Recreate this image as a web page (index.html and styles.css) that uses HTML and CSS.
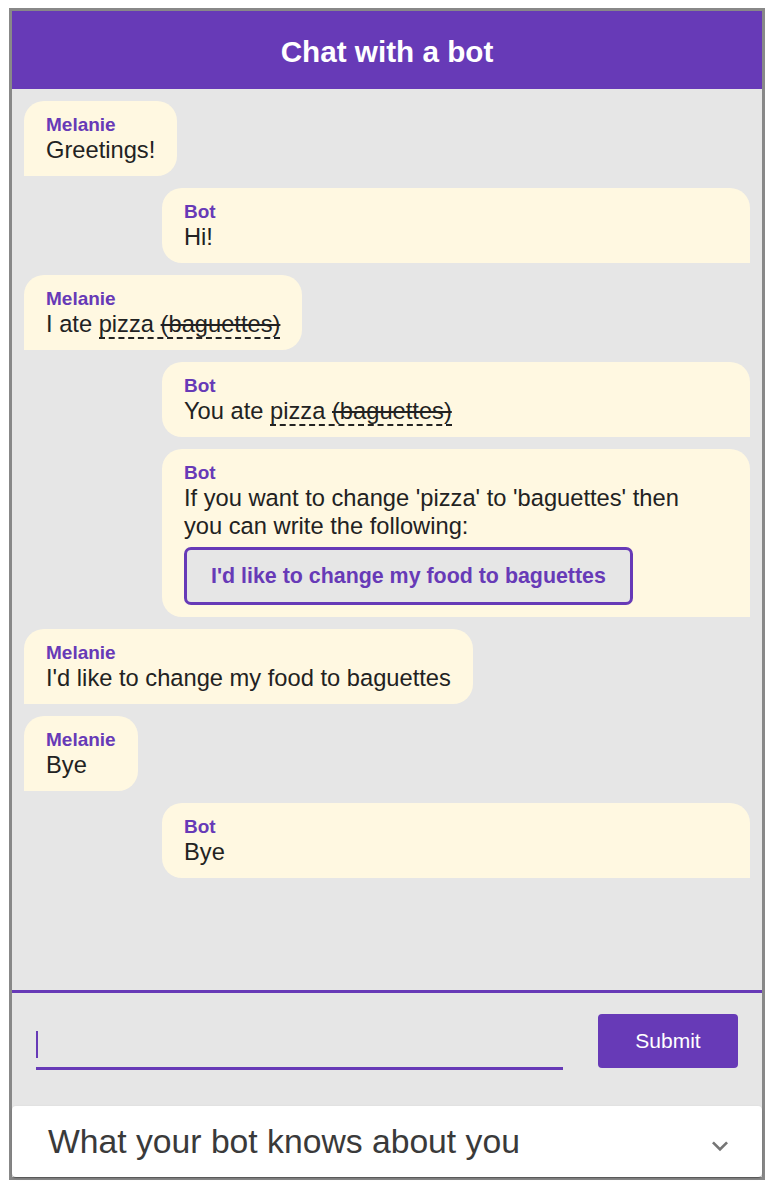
FILE: index.html
```html
<html lang="en">
<head>
<meta charset="UTF-8">
<meta name="viewport" content="width=device-width, initial-scale=1.0">
<title>Chat with a bot</title>
<link rel="stylesheet" href="styles.css">
</head>
<body>
<div class="container">
  <div class="header">
    <h1>Chat with a bot</h1>
  </div>

  <div class="messages">
    <div class="message user">
      <div class="name">Melanie</div>
      <div class="text">Greetings!</div>
    </div>
    <div class="message bot">
      <div class="name">Bot</div>
      <div class="text">Hi!</div>
    </div>
    <div class="message user">
      <div class="name">Melanie</div>
      <div class="text">I ate <span class="fix">pizza <s>(baguettes)</s></span></div>
    </div>
    <div class="message bot">
      <div class="name">Bot</div>
      <div class="text">You ate <span class="fix">pizza <s>(baguettes)</s></span></div>
    </div>
    <div class="message bot">
      <div class="name">Bot</div>
      <div class="text">If you want to change 'pizza' to 'baguettes' then you can write the following:</div>
      <button class="suggestion">I'd like to change my food to baguettes</button>
    </div>
    <div class="message user">
      <div class="name">Melanie</div>
      <div class="text">I'd like to change my food to baguettes</div>
    </div>
    <div class="message user">
      <div class="name">Melanie</div>
      <div class="text">Bye</div>
    </div>
    <div class="message bot">
      <div class="name">Bot</div>
      <div class="text">Bye</div>
    </div>
  </div>

  <form class="composer">
    <div class="field">
      <span class="caret"></span>
      <input type="text" name="message">
    </div>
    <button type="submit" class="submit">Submit</button>
  </form>

  <div class="panel">
    <span class="panel-title">What your bot knows about you</span>
    <svg class="expand" viewBox="0 0 24 24" width="32" height="32">
      <path d="M16.59 8.59L12 13.17 7.41 8.59 6 10l6 6 6-6z" fill="#757575"/>
    </svg>
  </div>
</div>
</body>
</html>
```

FILE: styles.css
```css
body {
  font-family: "Liberation Sans", Arial, sans-serif;
  margin: 8px 9px;
  background-color: #fff;
}

.container {
  width: 756px;
  height: 1172px;
  box-sizing: border-box;
  border: 3px solid #888;
  display: flex;
  flex-direction: column;
  background-color: #e6e6e6;
}

.header {
  height: 78px;
  flex-shrink: 0;
  box-sizing: border-box;
  padding-top: 4px;
  background-color: #673ab7;
  display: flex;
  justify-content: center;
  align-items: center;
}

.header h1 {
  margin: 0;
  color: #fff;
  font-size: 29.7px;
  font-weight: bold;
}

.messages {
  flex: 1;
  display: flex;
  flex-direction: column;
  gap: 12px;
  padding: 12px;
}

.message {
  background-color: #fff8e1;
  padding: 13px 22px 12px;
  color: #222;
}

.message.user {
  align-self: flex-start;
  border-radius: 20px 20px 20px 0;
}

.message.bot {
  margin-left: 138px;
  padding-right: 30px;
  border-radius: 20px 20px 0 20px;
}

.name {
  color: #673ab7;
  font-weight: bold;
  font-size: 19px;
  line-height: 22px;
}

.text {
  font-size: 23.7px;
  line-height: 28px;
}

.fix {
  border-bottom: 2px dashed #222;
}

.suggestion {
  display: block;
  margin-top: 7px;
  padding: 0 24px;
  height: 58px;
  border: 3px solid #673ab7;
  border-radius: 7px;
  background-color: #e6e6e6;
  color: #673ab7;
  font-family: "Liberation Sans", Arial, sans-serif;
  font-size: 21.4px;
  font-weight: bold;
  cursor: pointer;
}

.composer {
  height: 116px;
  flex-shrink: 0;
  box-sizing: border-box;
  margin: 0;
  border-top: 3px solid #673ab7;
  padding: 21px 24px 0;
  display: flex;
  align-items: flex-start;
  gap: 35px;
}

.field {
  flex: 1;
  margin-top: 17px;
  height: 39px;
  box-sizing: border-box;
  border-bottom: 3px solid #673ab7;
  position: relative;
}

.field input {
  width: 100%;
  height: 36px;
  border: none;
  outline: none;
  background: transparent;
  font-size: 24px;
  font-family: "Liberation Sans", Arial, sans-serif;
  padding: 0;
}

.caret {
  position: absolute;
  left: 0;
  top: 0;
  width: 2px;
  height: 27px;
  background-color: #673ab7;
}

.submit {
  width: 140px;
  height: 54px;
  border: none;
  border-radius: 4px;
  background-color: #673ab7;
  color: #fff;
  font-family: "Liberation Sans", Arial, sans-serif;
  font-size: 21px;
  cursor: pointer;
}

.panel {
  height: 71px;
  flex-shrink: 0;
  box-sizing: border-box;
  background-color: #fff;
  border-radius: 4px;
  box-shadow: 0 2px 1px -1px rgba(0, 0, 0, 0.2), 0 1px 1px 0 rgba(0, 0, 0, 0.14), 0 1px 3px 0 rgba(0, 0, 0, 0.12);
  padding: 0 26px 0 36px;
  display: flex;
  align-items: center;
  justify-content: space-between;
}

.panel-title {
  font-size: 33.7px;
  color: #3a3a3a;
}

.expand {
  margin-top: 8px;
}
```
